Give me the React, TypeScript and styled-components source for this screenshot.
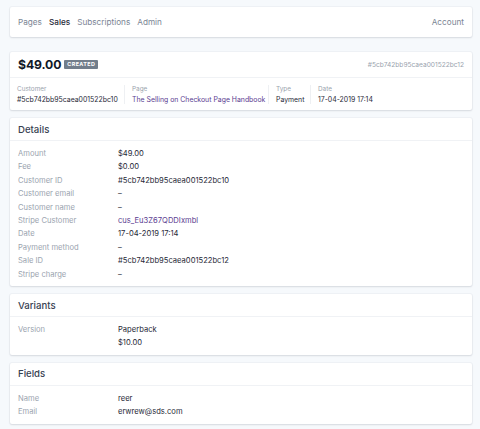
import React from "react";
import styled, { createGlobalStyle } from "styled-components";

const GlobalStyle = createGlobalStyle`
  html, body {
    margin: 0;
    padding: 0;
    background: #f6f9fc;
  }
  body {
    font-family: Inter, "Noto Sans", sans-serif;
    color: #1f2937;
    -webkit-font-smoothing: antialiased;
  }
`;

const Page = styled.div`
  width: 462px;
  padding: 7px 8px 6px 10px;
  display: flex;
  flex-direction: column;
  gap: 8px;
`;

const Card = styled.div`
  background: #ffffff;
  border-radius: 2px;
  box-shadow: 0 1px 2px rgba(30, 40, 60, 0.12), 0 0 0 1px rgba(30, 40, 60, 0.03);
`;

const Nav = styled(Card)`
  height: 30px;
  display: flex;
  align-items: center;
  padding: 0 8px;
  margin-bottom: 7px;
  font-size: 8.2px;
`;

const NavLink = styled.span<{ $active?: boolean; $last?: boolean }>`
  color: ${(p) => (p.$active ? "#1f2937" : "#7b8594")};
  font-weight: ${(p) => (p.$active ? 500 : 400)};
  margin-right: ${(p) => (p.$last ? 0 : 7)}px;
`;

const Spacer = styled.div`
  flex: 1;
`;

const SaleHead = styled.div`
  height: 25px;
  display: flex;
  align-items: center;
  padding: 0 8px;
  border-bottom: 1px solid #f0f2f5;
`;

const Amount = styled.span`
  font-size: 12.2px;
  font-weight: 700;
  color: #111827;
  letter-spacing: -0.1px;
`;

const Badge = styled.span`
  margin-left: 3px;
  background: #727e8c;
  color: #ffffff;
  font-size: 5.4px;
  font-weight: 700;
  letter-spacing: 0.4px;
  padding: 2px 3px;
  border-radius: 1px;
  line-height: 5px;
`;

const HashId = styled.span`
  font-size: 6.6px;
  color: #9aa3ae;
`;

const MetaRow = styled.div`
  display: flex;
  padding: 7px 0 6px;
`;

const MetaCell = styled.div<{ $width?: number }>`
  display: flex;
  flex-direction: column;
  gap: 2px;
  padding: 0 7px;
  border-left: 1px solid #eef0f3;
  box-sizing: border-box;
  width: ${(p) => (p.$width ? `${p.$width}px` : "auto")};
  &:first-child {
    border-left: none;
  }
`;

const MetaLabel = styled.span`
  font-size: 6.4px;
  color: #9aa3ae;
`;

const MetaValue = styled.span<{ $link?: boolean }>`
  font-size: 6.9px;
  color: ${(p) => (p.$link ? "#5b3d91" : "#1f2937")};
  white-space: nowrap;
`;

const SectionTitle = styled.div`
  height: 22px;
  display: flex;
  align-items: center;
  padding: 0 8px;
  font-size: 9.6px;
  font-weight: 500;
  color: #374151;
  border-bottom: 1px solid #f0f2f5;
`;

const Rows = styled.div`
  padding: 6px 8px 5px;
`;

const Row = styled.div`
  display: grid;
  grid-template-columns: 100px 1fr;
  line-height: 13.4px;
  font-size: 7.6px;
`;

const Label = styled.span`
  color: #9ba4af;
`;

const Value = styled.span<{ $link?: boolean }>`
  color: ${(p) => (p.$link ? "#5b3d91" : "#1f2937")};
`;

type Field = { label: string; value: string; link?: boolean };

const details: Field[] = [
  { label: "Amount", value: "$49.00" },
  { label: "Fee", value: "$0.00" },
  { label: "Customer ID", value: "#5cb742bb95caea001522bc10" },
  { label: "Customer email", value: "–" },
  { label: "Customer name", value: "–" },
  { label: "Stripe Customer", value: "cus_Eu3Z67QDDIxmbl", link: true },
  { label: "Date", value: "17-04-2019 17:14" },
  { label: "Payment method", value: "–" },
  { label: "Sale ID", value: "#5cb742bb95caea001522bc12" },
  { label: "Stripe charge", value: "–" },
];

const variants: Field[] = [
  { label: "Version", value: "Paperback" },
  { label: "", value: "$10.00" },
];

const fields: Field[] = [
  { label: "Name", value: "reer" },
  { label: "Email", value: "erwrew@sds.com" },
];

function Section({ title, items }: { title: string; items: Field[] }) {
  return (
    <Card>
      <SectionTitle>{title}</SectionTitle>
      <Rows>
        {items.map((f, i) => (
          <Row key={i}>
            <Label>{f.label}</Label>
            <Value $link={f.link}>{f.value}</Value>
          </Row>
        ))}
      </Rows>
    </Card>
  );
}

export default function App() {
  return (
    <>
      <GlobalStyle />
      <Page>
        <Nav>
          <NavLink>Pages</NavLink>
          <NavLink $active>Sales</NavLink>
          <NavLink>Subscriptions</NavLink>
          <NavLink>Admin</NavLink>
          <Spacer />
          <NavLink $last>Account</NavLink>
        </Nav>
        <Card>
          <SaleHead>
            <Amount>$49.00</Amount>
            <Badge>CREATED</Badge>
            <Spacer />
            <HashId>#5cb742bb95caea001522bc12</HashId>
          </SaleHead>
          <MetaRow>
            <MetaCell $width={114}>
              <MetaLabel>Customer</MetaLabel>
              <MetaValue>#5cb742bb95caea001522bc10</MetaValue>
            </MetaCell>
            <MetaCell $width={144}>
              <MetaLabel>Page</MetaLabel>
              <MetaValue $link>The Selling on Checkout Page Handbook</MetaValue>
            </MetaCell>
            <MetaCell $width={42}>
              <MetaLabel>Type</MetaLabel>
              <MetaValue>Payment</MetaValue>
            </MetaCell>
            <MetaCell>
              <MetaLabel>Date</MetaLabel>
              <MetaValue>17-04-2019 17:14</MetaValue>
            </MetaCell>
          </MetaRow>
        </Card>
        <Section title="Details" items={details} />
        <Section title="Variants" items={variants} />
        <Section title="Fields" items={fields} />
      </Page>
    </>
  );
}
